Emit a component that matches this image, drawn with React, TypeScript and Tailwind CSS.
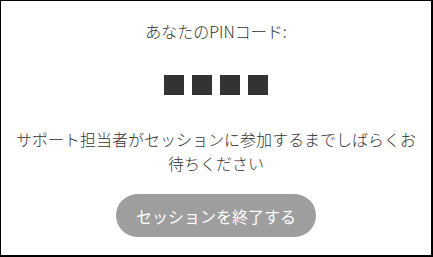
export default function App() {
  return (
    <div
      className="w-[433px] h-[257px] border-t border-l border-r-2 border-b-2 border-black bg-white flex flex-col items-center text-[#333] text-[16px] font-light"
      style={{ fontFamily: '"Noto Sans CJK JP", "Liberation Sans", sans-serif' }}
    >
      <p className="mt-[18px] leading-[24px]">あなたのPINコード:</p>

      <div className="mt-[32px] flex gap-[8px]">
        {[0, 1, 2, 3].map((i) => (
          <div key={i} className="w-[20px] h-[20px] bg-[#333]" />
        ))}
      </div>

      <p className="mt-[32px] px-[12px] text-center leading-[24px]">
        サポート担当者がセッションに参加するまでしばらくお待ちください
      </p>

      <button className="mt-[19px] w-[200px] h-[43px] rounded-full bg-[#9e9e9e] text-white text-[16px] font-normal">
        セッションを終了する
      </button>
    </div>
  );
}
